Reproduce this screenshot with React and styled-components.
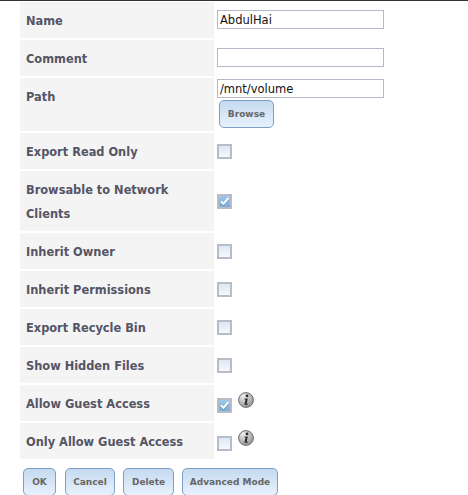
import React from "react";
import styled, { createGlobalStyle } from "styled-components";

const GlobalStyle = createGlobalStyle`
  html, body {
    margin: 0;
    padding: 0;
    height: 495px;
    overflow: hidden;
    background: #fff;
    font-family: "DejaVu Sans", Verdana, sans-serif;
  }
`;

const Page = styled.div`
  border-top: 1px solid #333;
  padding-left: 18px;
`;

const Form = styled.div`
  display: grid;
  grid-template-columns: 194px 1fr;
  gap: 2px;
  padding: 1px 2px 0;
`;

const Label = styled.div`
  background: #f4f4f4;
  padding: 7px 6px 5px;
  box-sizing: border-box;
  min-height: 36px;
  font-size: 11.4px;
  font-weight: bold;
  line-height: 24px;
  color: #555566;
`;

const Field = styled.div`
  display: flex;
  flex-direction: column;
  align-items: flex-start;
  padding: ${(p) => p.$top}px 0 0 1px;
  gap: 2px;
`;

const FlagField = styled.div`
  display: flex;
  align-items: flex-start;
  gap: 6px;
  padding: ${(p) => p.$top}px 0 0 1px;
`;

const TextInput = styled.input`
  width: 167px;
  height: 19px;
  box-sizing: border-box;
  border: 1px solid #b5b8c8;
  padding: 0 2px;
  font-family: "DejaVu Sans", Verdana, sans-serif;
  font-size: 11.5px;
  color: #111;
  background: #fff;
  outline: none;
`;

const Button = styled.button`
  height: 28px;
  width: ${(p) => p.$width}px;
  padding: 0;
  margin: ${(p) => p.$margin || 0};
  box-sizing: border-box;
  border: 1px solid #7ba0c4;
  border-radius: 5px;
  background: linear-gradient(#c4daf1, #e8f1fb);
  font-family: "DejaVu Sans", Verdana, sans-serif;
  font-size: 9px;
  font-weight: bold;
  color: #666;
`;

const CheckBox = styled.span`
  display: flex;
  align-items: center;
  justify-content: center;
  flex: none;
  width: 15px;
  height: 15px;
  margin-top: ${(p) => p.$offset || 0}px;
  box-sizing: border-box;
  border: 2px solid #b8bcc9;
  background: ${(p) =>
    p.$checked
      ? "linear-gradient(#9fc7e8, #7aaed8)"
      : "linear-gradient(#dbe8f3, #f5f8fb)"};
`;

const ButtonBar = styled.div`
  display: flex;
  gap: 8px;
  padding: 9px 0 0 5px;
`;

const Check = () => (
  <svg width="11" height="11" viewBox="0 0 11 11">
    <path d="M2 6.5l2.5 2.5L9.5 3" fill="none" stroke="#27598a" strokeWidth="1.5" />
    <path d="M2 5.5l2.5 2.5L9.5 2" fill="none" stroke="#fff" strokeWidth="2" />
  </svg>
);

const Info = () => (
  <svg width="16" height="16" viewBox="0 0 16 16">
    <defs>
      <radialGradient id="infoFill" cx="35%" cy="25%" r="85%">
        <stop offset="0" stopColor="#eeeeee" />
        <stop offset="1" stopColor="#8c8c8c" />
      </radialGradient>
    </defs>
    <circle cx="8" cy="8" r="7.4" fill="url(#infoFill)" stroke="#6b6b6b" />
    <circle cx="9" cy="3.9" r="1.4" fill="#2c2c2c" />
    <path d="M6.6 6.6h3.2L8.7 11.8h1.2v1H6.4l1.1-5.2h-1z" fill="#2c2c2c" />
  </svg>
);

const rows = [
  { label: "Export Read Only", top: 11 },
  { label: "Browsable to Network Clients", top: 23, checked: true },
  { label: "Inherit Owner", top: 11 },
  { label: "Inherit Permissions", top: 11 },
  { label: "Export Recycle Bin", top: 11 },
  { label: "Show Hidden Files", top: 11 },
  { label: "Allow Guest Access", top: 7, offset: 6, checked: true, info: true },
  { label: "Only Allow Guest Access", top: 7, offset: 6, info: true },
];

const App = () => {
  return (
    <Page>
      <GlobalStyle />
      <Form>
        <Label>Name</Label>
        <Field $top={8}>
          <TextInput defaultValue="AbdulHai" />
        </Field>
        <Label>Comment</Label>
        <Field $top={8}>
          <TextInput defaultValue="" />
        </Field>
        <Label>Path</Label>
        <Field $top={1}>
          <TextInput defaultValue="/mnt/volume" />
          <Button $width={55} $margin="0 0 3px 2px">Browse</Button>
        </Field>
        {rows.map((r) => (
          <React.Fragment key={r.label}>
            <Label>{r.label}</Label>
            <FlagField $top={r.top}>
              <CheckBox $checked={r.checked} $offset={r.offset}>
                {r.checked && <Check />}
              </CheckBox>
              {r.info && <Info />}
            </FlagField>
          </React.Fragment>
        ))}
      </Form>
      <ButtonBar>
        <Button $width={33} $margin="0 1px 0 0">OK</Button>
        <Button $width={50}>Cancel</Button>
        <Button $width={51}>Delete</Button>
        <Button $width={96}>Advanced Mode</Button>
      </ButtonBar>
    </Page>
  );
};

export default App;
